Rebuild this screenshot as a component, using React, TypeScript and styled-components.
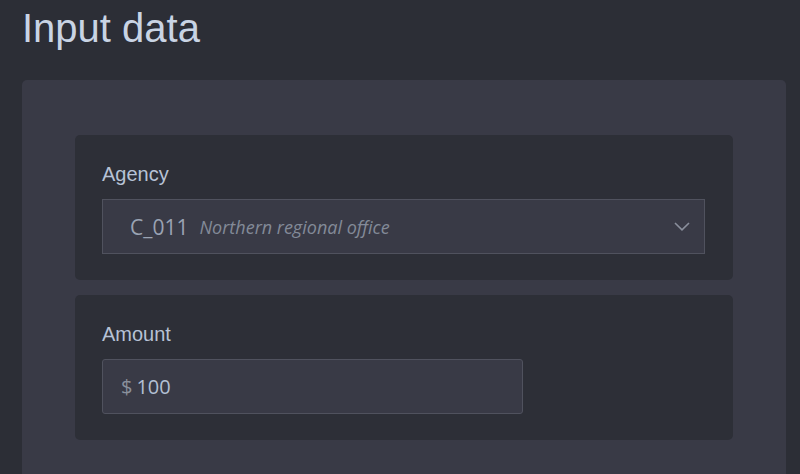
import React from "react";
import styled, { createGlobalStyle } from "styled-components";

const Global = createGlobalStyle`
  html, body { margin: 0; padding: 0; background: #2c2e36; }
  body { font-family: "Liberation Sans", Arial, sans-serif; }
`;

const Page = styled.div`
  padding: 6px 14px 0 22px;
  height: 474px;
  box-sizing: border-box;
  background: #2c2e36;
  overflow: hidden;
`;

const Title = styled.h1`
  margin: 0 0 29px 0;
  font-family: "Liberation Sans", Arial, sans-serif;
  font-weight: 400;
  font-size: 40px;
  line-height: 45px;
  color: #c9d4e4;
`;

const Panel = styled.section`
  background: #393a46;
  border-radius: 5px;
  padding: 55px 53px 40px 53px;
  display: flex;
  flex-direction: column;
  gap: 15px;
`;

const Card = styled.div`
  background: #2d2f37;
  border-radius: 5px;
  padding: 28px 28px 26px 27px;
  display: flex;
  flex-direction: column;
  gap: 13px;
`;

const Label = styled.label`
  font-family: "Liberation Sans", Arial, sans-serif;
  font-size: 20px;
  line-height: 23px;
  color: #b7c2d5;
`;

const Field = styled.div<{ $width?: string }>`
  box-sizing: border-box;
  height: 55px;
  width: ${(p) => p.$width ?? "100%"};
  background: #393a46;
  border: 1px solid #50525e;
  border-radius: ${(p) => (p.$width ? "3px" : "0")};
  display: flex;
  align-items: center;
  padding: 0 14px 0 27px;
  font-family: "Open Sans", "DejaVu Sans", sans-serif;
`;

const Code = styled.span`
  font-size: 21px;
  color: #9aa3b3;
`;

const Desc = styled.span`
  font-size: 18px;
  font-style: italic;
  color: #838a98;
  margin-left: 11px;
`;

const Spacer = styled.span`
  flex: 1;
`;

const Chevron = styled.svg`
  width: 16px;
  height: 9px;
  display: block;
`;

const Currency = styled.span`
  font-size: 20px;
  color: #8a909c;
  margin-left: -9px;
  margin-right: 4px;
`;

const Value = styled.span`
  font-size: 20px;
  color: #b3c0d4;
`;

export default function App() {
  return (
    <>
      <Global />
      <Page>
        <Title>Input data</Title>
        <Panel>
          <Card>
            <Label>Agency</Label>
            <Field>
              <Code>C_011</Code>
              <Desc>Northern regional office</Desc>
              <Spacer />
              <Chevron viewBox="0 0 16 9">
                <path d="M1 1 L8 7.8 L15 1" fill="none" stroke="#8a8f9c" strokeWidth="1.6" />
              </Chevron>
            </Field>
          </Card>
          <Card>
            <Label>Amount</Label>
            <Field $width="421px">
              <Currency>$</Currency>
              <Value>100</Value>
            </Field>
          </Card>
        </Panel>
      </Page>
    </>
  );
}
